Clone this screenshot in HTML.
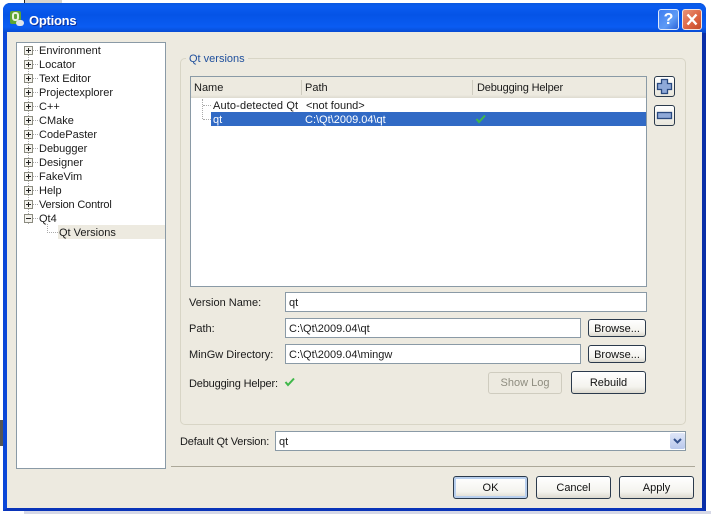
<!DOCTYPE html>
<html><head><meta charset="utf-8">
<style>
html,body{margin:0;padding:0;width:711px;height:514px;overflow:hidden;background:#fff;font-family:"Liberation Sans",sans-serif;font-size:11px;color:#1a1a1a}
div,span{position:absolute;box-sizing:border-box;white-space:nowrap}
.t{line-height:14px;height:14px}
.n{letter-spacing:-.17px}
.btn{border:1px solid #2b3a4c;border-radius:3px;background:linear-gradient(#fff,#f4f3ee 70%,#dcd9cf);text-align:center;color:#111}
.inp{background:#fff;border:1px solid #8a9aa6;line-height:20px;padding-left:3px}
.box{width:9px;height:9px;border:1px solid #8b8b80;background:#f4f3ee;left:24px}
.box:before{content:"";position:absolute;left:1px;top:3px;width:5px;height:1px;background:#222}
.box.p:after{content:"";position:absolute;left:3px;top:1px;width:1px;height:5px;background:#222}
.dh{height:0;border-top:1px dotted #aaa}
.dv{width:0;border-left:1px dotted #aaa}
</style></head><body>
<!-- desktop bits -->
<div style="left:25px;top:0;width:37px;height:3px;background:#d8d5cc"></div>
<div style="left:24px;top:0;width:1px;height:3px;background:#222"></div>
<div style="left:0;top:420px;width:3px;height:26px;background:#555"></div>
<div style="left:24px;top:511px;width:687px;height:3px;background:#d6d8e6"></div>
<!-- window -->
<div style="left:3px;top:3px;width:703px;height:508px;border-radius:7px 7px 0 0;background:#0a3fd0;border-bottom:3px solid #0a34b8;border-left:4px solid #0b47d8;border-right:4px solid #0a2fa8"></div>
<div style="left:3px;top:3px;width:703px;height:30px;border-radius:7px 7px 0 0;background:linear-gradient(#0a58e0,#0a5cf0 12%,#0554e6 40%,#0a5cf2 80%,#0748cc)"></div>
<div style="left:7px;top:32px;width:695px;height:476px;background:#edeae0"></div>
<!-- title icon -->
<div style="left:10px;top:11px;width:11px;height:13px;border-radius:2px;background:#5fa532"></div>
<div style="left:12px;top:12px;width:7px;height:9px;border:2px solid #e8f4d8;border-radius:3px"></div>
<div style="left:16px;top:20px;width:8px;height:6px;border-radius:3px;background:#dfe4ea"></div>
<div style="left:29px;top:13px;font-weight:bold;font-size:13px;letter-spacing:-.25px;line-height:15px;color:#fff;text-shadow:1px 1px 0 #0a2f9c">Options</div>
<!-- title buttons -->
<div style="left:658px;top:9px;width:21px;height:21px;border:1px solid #dfe8fa;border-radius:3px;background:linear-gradient(135deg,#3d7cf0,#5e9bf5 60%,#2a62d8);color:#fff;font-weight:bold;font-size:16px;line-height:19px;text-align:center">?</div>
<div style="left:682px;top:9px;width:20px;height:21px;border:1px solid #f4e4dc;border-radius:3px;background:linear-gradient(135deg,#e89478,#dc6240 60%,#c24a28)">
<svg width="18" height="19" style="position:absolute;left:0;top:0"><path d="M4.5 4.5L13.5 14.5M13.5 4.5L4.5 14.5" stroke="#fff" stroke-width="2.4"/></svg></div>
<!-- tree panel -->
<div style="left:16px;top:42px;width:150px;height:427px;background:#fff;border:1px solid #8a9aa6"></div>
<div style="left:28px;top:48px;height:176px" class="dv"></div>
<div class="dh" style="left:33px;top:50px;width:5px"></div><div class="box p" style="top:46px"></div><div class="t" style="left:39px;top:44px">Environment</div>
<div class="dh" style="left:33px;top:64px;width:5px"></div><div class="box p" style="top:60px"></div><div class="t" style="left:39px;top:58px">Locator</div>
<div class="dh" style="left:33px;top:78px;width:5px"></div><div class="box p" style="top:74px"></div><div class="t" style="left:39px;top:72px">Text Editor</div>
<div class="dh" style="left:33px;top:92px;width:5px"></div><div class="box p" style="top:88px"></div><div class="t" style="left:39px;top:86px">Projectexplorer</div>
<div class="dh" style="left:33px;top:106px;width:5px"></div><div class="box p" style="top:102px"></div><div class="t" style="left:39px;top:100px">C++</div>
<div class="dh" style="left:33px;top:120px;width:5px"></div><div class="box p" style="top:116px"></div><div class="t" style="left:39px;top:114px">CMake</div>
<div class="dh" style="left:33px;top:134px;width:5px"></div><div class="box p" style="top:130px"></div><div class="t" style="left:39px;top:128px">CodePaster</div>
<div class="dh" style="left:33px;top:148px;width:5px"></div><div class="box p" style="top:144px"></div><div class="t" style="left:39px;top:142px">Debugger</div>
<div class="dh" style="left:33px;top:162px;width:5px"></div><div class="box p" style="top:158px"></div><div class="t" style="left:39px;top:156px">Designer</div>
<div class="dh" style="left:33px;top:176px;width:5px"></div><div class="box p" style="top:172px"></div><div class="t" style="left:39px;top:170px">FakeVim</div>
<div class="dh" style="left:33px;top:190px;width:5px"></div><div class="box p" style="top:186px"></div><div class="t" style="left:39px;top:184px">Help</div>
<div class="dh" style="left:33px;top:204px;width:5px"></div><div class="box p" style="top:200px"></div><div class="t n" style="left:39px;top:198px">Version Control</div>
<div class="dh" style="left:33px;top:218px;width:5px"></div><div class="box" style="top:214px"></div><div class="t" style="left:39px;top:212px">Qt4</div>
<div class="dv" style="left:47px;top:224px;height:9px"></div>
<div class="dh" style="left:47px;top:232px;width:11px"></div>
<div style="left:58px;top:225px;width:107px;height:14px;background:#edeae0"></div>
<div class="t" style="left:59px;top:226px">Qt Versions</div>
<!-- right panel separators -->
<div style="left:171px;top:466px;width:524px;height:1px;background:#aca899"></div>
<!-- group -->
<div style="left:180px;top:58px;width:506px;height:367px;border:1px solid #d8d5c6;border-radius:5px"></div>
<div style="left:186px;top:51px;width:62px;height:14px;background:#edeae0"></div>
<div class="t" style="left:189px;top:52px;color:#1f4f9c">Qt versions</div>
<!-- table -->
<div style="left:190px;top:76px;width:457px;height:211px;background:#fff;border:1px solid #8a9aa6"></div>
<div style="left:191px;top:77px;width:455px;height:21px;background:linear-gradient(#edeae0,#edeae0 85%,#dedbd0)"></div>
<div style="left:301px;top:80px;width:1px;height:15px;background:#cfccc0"></div>
<div style="left:472px;top:80px;width:1px;height:15px;background:#cfccc0"></div>
<div class="t" style="left:194px;top:81px">Name</div>
<div class="t" style="left:305px;top:81px">Path</div>
<div class="t n" style="left:477px;top:81px">Debugging Helper</div>
<div style="left:211px;top:112px;width:435px;height:14px;background:#316ac5"></div>
<div class="dv" style="left:202px;top:99px;height:20px"></div>
<div class="dh" style="left:203px;top:105px;width:8px"></div>
<div class="dh" style="left:203px;top:119px;width:8px"></div>
<div class="t" style="left:213px;top:99px;letter-spacing:.13px">Auto-detected Qt</div>
<div class="t" style="left:306px;top:99px">&lt;not found&gt;</div>
<div class="t" style="left:213px;top:113px;color:#fff">qt</div>
<div class="t" style="left:305px;top:113px;color:#fff">C:\Qt\2009.04\qt</div>
<svg width="12" height="10" style="position:absolute;left:475px;top:114px"><path d="M1.5 5L4 8L10 1.5" fill="none" stroke="#3fb84a" stroke-width="2"/></svg>
<!-- plus/minus -->
<div style="left:654px;top:76px;width:21px;height:21px;border:1px solid #2b3a4c;border-radius:3px;background:linear-gradient(#fff,#e8e6dc)">
<svg width="19" height="19" style="position:absolute;left:0;top:0"><path d="M6.5 2.5H12.5V6.5H16.5V12.5H12.5V16.5H6.5V12.5H2.5V6.5H6.5Z" fill="#8fa9d8" stroke="#2a4a80" stroke-width="1.3"/></svg></div>
<div style="left:654px;top:105px;width:21px;height:21px;border:1px solid #2b3a4c;border-radius:3px;background:linear-gradient(#fff,#e8e6dc)">
<svg width="19" height="19" style="position:absolute;left:0;top:0"><rect x="2.5" y="6.5" width="14" height="6" fill="#8fa9d8" stroke="#2a4a80" stroke-width="1.3"/></svg></div>
<!-- fields -->
<div class="t" style="left:189px;top:296px">Version Name:</div>
<div class="inp" style="left:285px;top:292px;width:362px;height:20px">qt</div>
<div class="t" style="left:189px;top:322px">Path:</div>
<div class="inp" style="left:285px;top:318px;width:296px;height:20px">C:\Qt\2009.04\qt</div>
<div class="btn" style="left:588px;top:319px;width:58px;height:18px;line-height:18px">Browse...</div>
<div class="t" style="left:189px;top:348px">MinGw Directory:</div>
<div class="inp" style="left:285px;top:344px;width:296px;height:20px">C:\Qt\2009.04\mingw</div>
<div class="btn" style="left:588px;top:345px;width:58px;height:18px;line-height:18px">Browse...</div>
<div class="t n" style="left:189px;top:377px">Debugging Helper:</div>
<svg width="12" height="10" style="position:absolute;left:284px;top:377px"><path d="M1.5 5L4 8L10 1.5" fill="none" stroke="#3fb84a" stroke-width="2"/></svg>
<div class="btn" style="left:488px;top:372px;width:74px;height:22px;line-height:21px;border-color:#cfccbf;background:#edeae0;color:#8f8d80">Show Log</div>
<div class="btn" style="left:571px;top:371px;width:75px;height:23px;line-height:23px">Rebuild</div>
<!-- default -->
<div class="t n" style="left:180px;top:435px">Default Qt Version:</div>
<div class="inp" style="left:275px;top:431px;width:411px;height:20px">qt</div>
<div style="left:670px;top:433px;width:15px;height:16px;background:linear-gradient(#dfe6f8,#b9c8ec);border-radius:2px">
<svg width="15" height="16" style="position:absolute;left:0;top:0"><path d="M4 6L7.5 9.5L11 6" fill="none" stroke="#33508c" stroke-width="2"/></svg></div>
<!-- bottom buttons -->
<div class="btn" style="left:453px;top:476px;width:75px;height:23px;line-height:23px;box-shadow:inset 0 0 0 2px #b8cfee">OK</div>
<div class="btn" style="left:536px;top:476px;width:75px;height:23px;line-height:23px">Cancel</div>
<div class="btn" style="left:619px;top:476px;width:75px;height:23px;line-height:23px">Apply</div>
</body></html>
